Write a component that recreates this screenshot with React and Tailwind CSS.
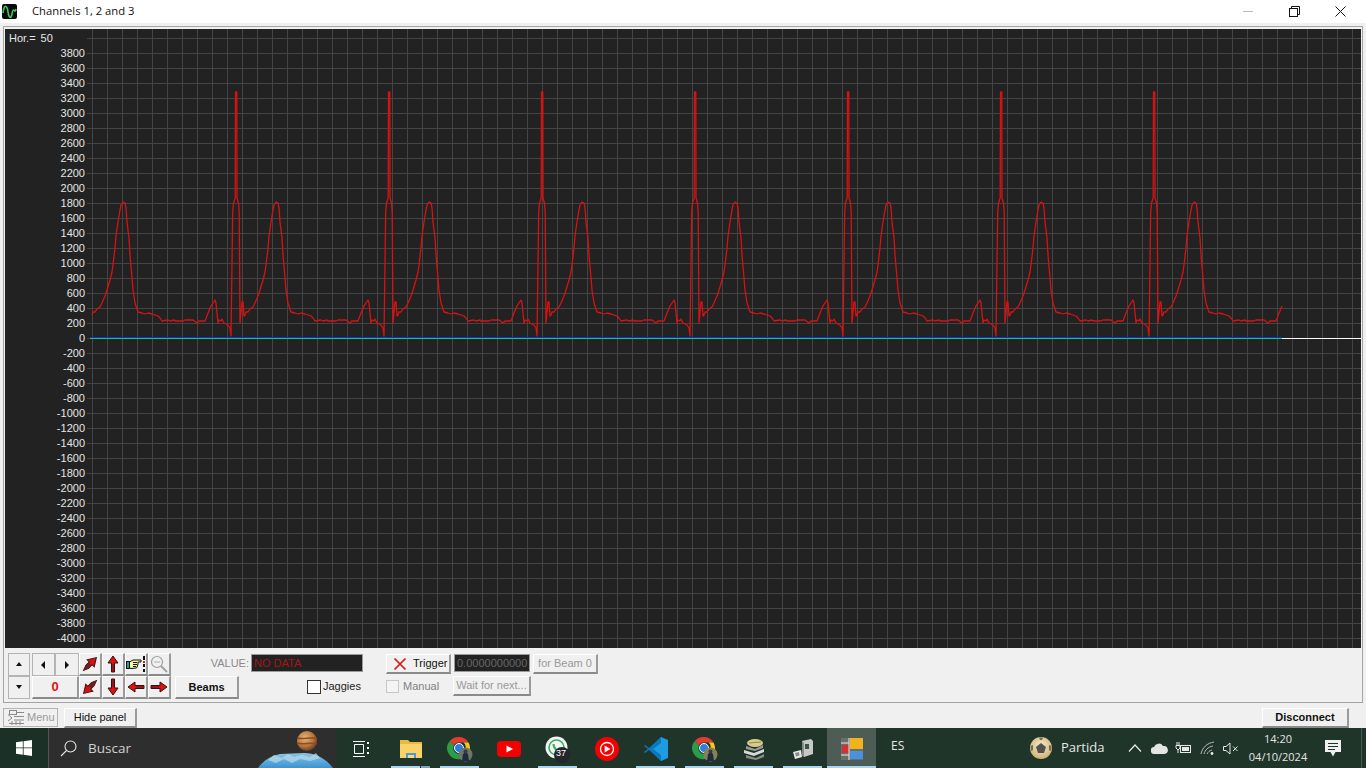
import React from 'react';

const labels = [];
for (let v = 3800; v >= -4000; v -= 200) labels.push(v);

const gridX = [];
for (let x = 92; x < 1361; x += 15) gridX.push(x);
const gridY = [];
for (let y = 38; y < 648; y += 15) gridY.push(y);

// one heartbeat of the trace, in screen coordinates of the first period
const beat = [
  [92, 315], [93, 312], [95, 312], [97, 309], [100, 307], [102, 303], [105, 296], [107, 290], [110, 280], [112, 272],
  [113, 265], [115, 248], [116, 236], [118, 222], [120, 210], [121, 205], [123, 202], [125, 203], [126, 208], [127, 222],
  [129, 238], [130, 255], [132, 278], [133, 290], [135, 303], [137, 309], [138, 312], [142, 313], [145, 314], [148, 313],
  [152, 314], [158, 316], [160, 318], [162, 321], [168, 320], [170, 321], [174, 320], [175, 321], [183, 321], [185, 320],
  [193, 320], [197, 323], [199, 321], [205, 321], [208, 313], [211, 306], [213, 303], [215, 300], [216, 303], [218, 323],
  [219, 320], [221, 321], [222, 319], [224, 323], [228, 325], [230, 328], [231, 336], [232.7, 212], [233.5, 203], [235.2, 198],
  [235.5, 92], [236.8, 92], [237, 198], [238.5, 203], [239.2, 212], [240, 323], [242, 302], [243, 302], [244, 316],
];

const tracePoints = [];
for (let k = 0; k < 8; k++) {
  beat.forEach(([x, y]) => {
    if (x + 153 * k <= 1282) tracePoints.push(`${x + 153 * k},${y}`);
  });
}

const raised = 'border-t border-l border-r-2 border-b-2 border-t-white border-l-white border-r-[#9a9a9a] border-b-[#8a8a8a] bg-[#f0f0f0] whitespace-nowrap';
const flat = 'border border-[#b4b4b4] bg-[#f0f0f0]';

function Chart() {
  return (
    <svg className="w-[1274px] h-[619px] block" viewBox="87 29 1274 619">
      {gridX.map(x => <rect key={x} x={x} y={29} width={1} height={619} fill="#444444" />)}
      {gridY.map(y => <rect key={y} x={87} y={y} width={1274} height={1} fill="#444444" />)}
      <rect x={90} y={337} width={1192} height={1} fill="#0a30c8" />
      <rect x={90} y={338} width={1192} height={1} fill="#18c878" />
      <rect x={1282} y={338} width={79} height={1} fill="#ffffff" />
      <polyline points={tracePoints.join(' ')} fill="none" stroke="#d81212" strokeWidth="1.3" strokeLinejoin="round" />
    </svg>
  );
}

function Tri({ dir }) {
  const pts = { up: '4,1 7,5 1,5', down: '1,1 7,1 4,5', left: '5,0 5,8 1,4', right: '2,0 2,8 6,4' };
  return (
    <svg width="8" height="8" viewBox="0 0 8 8">
      <polygon points={pts[dir]} fill="#111111" />
    </svg>
  );
}

function Arrow({ rotate = 0, long = false }) {
  return (
    <svg width="20" height="20" viewBox="0 0 20 20">
      <g transform={`rotate(${rotate} 10 10)`}>
        {long ? (
          <>
            <path d="M10 1 L15 9 L12 9 L12 14 L10 19 L8 14 L8 9 L5 9 Z" fill="#d81010" stroke="#3a1010" strokeWidth="1" />
            <path d="M8 10 L12 10 L12 14 L10 19 L8 14 Z" fill="#6a2020" />
          </>
        ) : (
          <>
            <path d="M10 2 L15 9 L11.5 9 L11.5 18 L8.5 18 L8.5 9 L5 9 Z" fill="#e01010" stroke="#301010" strokeWidth="1" />
            <path d="M10 10 L10 18" stroke="#5a1818" strokeWidth="1" />
          </>
        )}
      </g>
    </svg>
  );
}

function HandIcon() {
  return (
    <svg width="20" height="18" viewBox="0 0 20 18">
      <rect x="0.5" y="6.5" width="3" height="7" fill="#2a9a9a" stroke="#111" strokeWidth="1" />
      <path d="M3.5 7 L7 5 L15 5 L15 7 L12 7 L12 9 L11.5 11 L10.5 13 L5 13.5 L3.5 13 Z" fill="#f8f69a" stroke="#111" strokeWidth="1" />
      <path d="M7 7.5 L11 7.5 M7 9.5 L11 9.5 M7 11.5 L10 11.5" stroke="#111" strokeWidth="1" />
      <rect x="17" y="1" width="2" height="4" fill="#111" />
      <rect x="17" y="6" width="2" height="2" fill="#d02020" />
      <rect x="17" y="9" width="2" height="3" fill="#111" />
      <rect x="17" y="14" width="2" height="3" fill="#111" />
    </svg>
  );
}

function ZoomIcon() {
  return (
    <svg width="20" height="20" viewBox="0 0 20 20" fill="none">
      <circle cx="8" cy="8" r="5.5" stroke="#a0a0a0" strokeWidth="1.2" />
      <path d="M5 8 L11 8" stroke="#b0b0b0" strokeWidth="1" />
      <path d="M12 12 L18 18" stroke="#a0a0a0" strokeWidth="2" />
    </svg>
  );
}

function MenuIcon() {
  return (
    <svg width="16" height="15" viewBox="0 0 16 15" fill="none" stroke="#8a8a8a" strokeWidth="1">
      <rect x="1.5" y="0.5" width="7" height="4" />
      <path d="M0 4.5 L4 8 L0 11 M8 2.5 L16 2.5 M6 6.5 L16 6.5 M6 10 L16 10 M1 13.5 L16 13.5 M4 11 L4 15 M8 11 L8 15 M12 11 L12 15" />
    </svg>
  );
}

function ControlCluster() {
  return (
    <div className="flex">
      <div className="flex flex-col w-[22px]">
        <button className={`${flat} h-[23px] flex items-center justify-center`}><Tri dir="up" /></button>
        <button className={`${flat} h-[23px] flex items-center justify-center`}><Tri dir="down" /></button>
      </div>
      <div className="flex flex-col w-[47px] ml-[2px]">
        <div className="flex">
          <button className={`${flat} w-[23px] h-[23px] flex items-center justify-center`}><Tri dir="left" /></button>
          <button className={`${flat} w-[24px] h-[23px] flex items-center justify-center`}><Tri dir="right" /></button>
        </div>
        <button className={`${raised} h-[23px] text-[#e01010] font-bold text-[13px]`}>0</button>
      </div>
      <div className="grid grid-cols-[23px_23px_23px_23px] grid-rows-[23px_23px]">
        <button className={`${raised} flex items-center justify-center`}><Arrow rotate={45} long /></button>
        <button className={`${raised} flex items-center justify-center`}><Arrow /></button>
        <button className={`${raised} flex items-center justify-center`}><HandIcon /></button>
        <button className={`${raised} flex items-center justify-center`}><ZoomIcon /></button>
        <button className={`${raised} flex items-center justify-center`}><Arrow rotate={225} long /></button>
        <button className={`${raised} flex items-center justify-center`}><Arrow rotate={180} /></button>
        <button className={`${raised} flex items-center justify-center`}><Arrow rotate={270} /></button>
        <button className={`${raised} flex items-center justify-center`}><Arrow rotate={90} /></button>
      </div>
    </div>
  );
}

function ValueGroup() {
  return (
    <div className="flex flex-col w-[188px] ml-[4px]">
      <div className="flex items-center justify-end h-[18px] mt-[1px] mb-[4px]">
        <span className="text-[11px] text-[#8a8a8a] mr-[2px]">VALUE:</span>
        <div className="w-[112px] h-[18px] bg-[#222222] border border-[#9a9a9a] text-[#a81414] text-[11px] leading-[16px] pl-[2px]">NO DATA</div>
      </div>
      <div className="flex items-center h-[23px]">
        <button className={`${raised} w-[64px] h-[23px] text-[11px] font-bold text-[#111]`}>Beams</button>
        <span className="w-[14px] h-[14px] ml-[68px] mb-[2px] border border-[#333] bg-white" />
        <span className="ml-[2px] mb-[2px] text-[11px] text-[#222]">Jaggies</span>
      </div>
    </div>
  );
}

function TriggerGroup() {
  return (
    <div className="flex flex-col ml-[23px] mt-[1px] gap-[2px]">
      <div className="flex h-[20px]">
        <button className={`${raised} w-[65px] flex items-center text-[11px] text-[#111] pl-[6px]`}>
          <svg width="14" height="14" viewBox="0 0 14 14" fill="none" stroke="#d81818" strokeWidth="1.7">
            <path d="M1.5 1.5 L12.5 12.5 M12.5 1.5 L1.5 12.5" />
          </svg>
          <span className="ml-[6px]">Trigger</span>
        </button>
        <div className="w-[76px] h-[18px] ml-[3px] bg-[#222222] border border-[#9a9a9a] text-[#666666] text-[11px] leading-[16px] pl-[2px] whitespace-nowrap">0.0000000000</div>
        <button className={`${raised} w-[65px] ml-[3px] text-[11px] text-[#999999]`}>for Beam 0</button>
      </div>
      <div className="flex items-center h-[20px]">
        <span className="w-[13px] h-[13px] border border-[#c8c8c8] bg-[#f4f4f4]" />
        <span className="ml-[4px] w-[50px] text-[11px] text-[#808080]">Manual</span>
        <button className={`${raised} w-[78px] h-[20px] text-[11px] text-[#999999]`}>Wait for next...</button>
      </div>
    </div>
  );
}

function WindowsLogo() {
  return (
    <svg width="16" height="16" viewBox="0 0 16 16" fill="#ffffff">
      <path d="M0 2.3 L6.8 1.3 L6.8 7.5 L0 7.5 Z M7.6 1.2 L16 0 L16 7.5 L7.6 7.5 Z M0 8.3 L6.8 8.3 L6.8 14.7 L0 13.7 Z M7.6 8.3 L16 8.3 L16 16 L7.6 14.8 Z" />
    </svg>
  );
}

function PlanetArt() {
  return (
    <svg width="78" height="40" viewBox="0 0 78 40">
      <defs>
        <radialGradient id="jup" cx="0.4" cy="0.35" r="0.7">
          <stop offset="0" stopColor="#e8b47a" />
          <stop offset="0.6" stopColor="#b8743a" />
          <stop offset="1" stopColor="#5a3a28" />
        </radialGradient>
        <linearGradient id="ice" x1="0" y1="0" x2="0" y2="1">
          <stop offset="0" stopColor="#8cc4de" />
          <stop offset="1" stopColor="#3a94d4" />
        </linearGradient>
      </defs>
      <path d="M0 40 C5 33 12 28 22 26 L46 25 C58 25 68 31 75 40 Z" fill="url(#ice)" />
      <path d="M10 32 L16 27 L24 30 L30 26 L36 29 L44 27 L52 29 L58 25 L62 30 L52 33 L42 31 L34 35 L26 31 L18 35 Z" fill="#b8dcec" opacity="0.7" />
      <circle cx="49" cy="13" r="10" fill="url(#jup)" />
      <path d="M39.5 10 C45 12 53 8 59 11 M39 15 C45 17 53 14 59 16" stroke="#8a4e22" strokeWidth="1.5" fill="none" />
    </svg>
  );
}

function ChromeIcon({ avatar }) {
  return (
    <svg width="26" height="26" viewBox="0 0 26 26">
      <path d="M12 1 A11 11 0 0 1 21.5 6.5 L12 6.5 A5.5 5.5 0 0 0 7 9.5 L2.8 5 A11 11 0 0 1 12 1 Z" fill="#e33b2e" />
      <path d="M21.5 6.5 A11 11 0 0 1 13 23 L17 15 A5.5 5.5 0 0 0 16.5 6.5 Z" fill="#f8c51c" />
      <path d="M2.8 5 A11 11 0 0 0 13 23 L17 15 A5.5 5.5 0 0 1 7 9.5 Z" fill="#2a9d48" />
      <circle cx="12" cy="12" r="4.5" fill="#2f7de0" stroke="#ffffff" strokeWidth="1" />
      <circle cx="18.5" cy="18.5" r="7" fill={avatar} />
      <path d="M15 25 L16 18 L18.5 16 L21 18 L22 25 Z" fill="#1c2a44" />
      <circle cx="18.5" cy="15.5" r="2" fill="#3a3a3a" />
    </svg>
  );
}

function YoutubeIcon() {
  return (
    <svg width="24" height="18" viewBox="0 0 24 18">
      <rect x="0" y="1" width="24" height="16" rx="4" fill="#f40000" />
      <polygon points="9.5,5.5 9.5,12.5 16,9" fill="#ffffff" />
    </svg>
  );
}

function WhatsappIcon() {
  return (
    <svg width="28" height="28" viewBox="0 0 28 28">
      <circle cx="12.5" cy="12.5" r="11" fill="#f4f4f4" />
      <circle cx="12.5" cy="12.5" r="7.5" fill="none" stroke="#38b060" strokeWidth="1.6" />
      <path d="M9.5 9 C9.5 13 12.5 16 16 16" fill="none" stroke="#38b060" strokeWidth="2.2" />
      <circle cx="18" cy="20" r="8" fill="#23272b" />
    </svg>
  );
}

function YtMusicIcon() {
  return (
    <svg width="24" height="24" viewBox="0 0 24 24">
      <circle cx="12" cy="12" r="12" fill="#f40000" />
      <circle cx="12" cy="12" r="6.5" fill="none" stroke="#ffffff" strokeWidth="1.3" />
      <polygon points="9.7,8.6 9.7,15.4 15.4,12" fill="#ffffff" />
    </svg>
  );
}

function FolderIcon() {
  return (
    <svg width="24" height="22" viewBox="0 0 24 22">
      <path d="M1 2 L9 2 L11 4 L23 4 L23 7 L1 7 Z" fill="#e8b840" />
      <rect x="1" y="6" width="22" height="14" fill="#fbd267" />
      <path d="M7 20 L7 15 L17 15 L17 20 Z" fill="#4a9ad8" />
      <rect x="9" y="17" width="6" height="3" fill="#f8d878" />
    </svg>
  );
}

function VscodeIcon() {
  return (
    <svg width="24" height="26" viewBox="0 0 24 26">
      <path d="M17 1 L24 4 L24 22 L17 25 L6 13 Z" fill="#1f9be0" />
      <path d="M17 1 L5 12 L1 9 L0 10 L4 13 L0 16 L1 17 L5 14 L17 25 L17 19 L9 13 L17 7 Z" fill="#0a78bd" />
    </svg>
  );
}

function BooksIcon() {
  return (
    <svg width="24" height="24" viewBox="0 0 24 24">
      <path d="M4 18 L14 21 L22 17 L22 20 L14 23 L4 21 Z" fill="#8a8a8a" />
      <path d="M2 13 L12 16 L22 12 L22 15 L12 19 L2 16 Z" fill="#d8d8d8" />
      <path d="M4 9 L13 12 L21 8 L21 11 L13 14 L4 12 Z" fill="#9a9a9a" />
      <ellipse cx="13" cy="6" rx="8" ry="4" fill="#d8cc88" />
      <path d="M7 6 L19 5" stroke="#8a8a50" strokeWidth="1" />
    </svg>
  );
}

function ComputerIcon() {
  return (
    <svg width="24" height="24" viewBox="0 0 24 24">
      <path d="M11 4 L20 2 L22 4 L22 17 L13 20 L11 18 Z" fill="#c8c8c8" />
      <path d="M11 4 L13 6 L13 20 L11 18 Z" fill="#8a8a8a" />
      <rect x="14" y="7" width="4" height="5" fill="#2f5a48" />
      <path d="M2 15 L10 13 L11 20 L4 22 Z" fill="#e8e8e8" />
      <path d="M4 16 L8 15 L8.5 18.5 L5 19.5 Z" fill="#8a8a8a" />
    </svg>
  );
}

function PaletteIcon() {
  return (
    <svg width="22" height="24" viewBox="0 0 22 24">
      <rect x="0" y="1" width="22" height="22" fill="#8a8a8a" opacity="0.45" />
      <rect x="9" y="1" width="13" height="11" fill="#f2b21c" />
      <rect x="9" y="14" width="13" height="8" fill="#4a90dc" />
      <rect x="1" y="8" width="7" height="8" fill="#d83030" />
      <path d="M8 1 L8 23 M0 6 L8 6 M0 18 L8 18" stroke="#e8e8e8" strokeWidth="1" />
    </svg>
  );
}

function Slot({ underline, split, active, children }) {
  return (
    <div className={`w-[49px] h-full flex flex-col ${active ? 'bg-[#4d5c54]' : ''}`}>
      <div className="relative flex-1 flex items-center justify-center pt-[3px]">{children}</div>
      <div className={`h-[2px] flex ${active ? '' : 'mx-[5px]'}`}>
        {underline && <div className="flex-1 bg-[#a6d4f2]" />}
        {split && <div className="w-[9px] ml-[1px] bg-[#7ea4bc]" />}
      </div>
    </div>
  );
}

function TrayIcons() {
  return (
    <div className="flex items-center h-full">
      <div className="w-[24px] flex justify-center">
        <svg width="14" height="8" viewBox="0 0 14 8" fill="none" stroke="#e8e8e8" strokeWidth="1.2"><path d="M1 7.5 L7 1 L13 7.5" /></svg>
      </div>
      <div className="w-[24px] flex justify-center">
        <svg width="17" height="11" viewBox="0 0 17 11" fill="#e4e4e4"><path d="M3.5 11 A3.5 3.5 0 0 1 3 4 A5 5 0 0 1 12 3 A4 4 0 0 1 13.5 11 Z" /></svg>
      </div>
      <div className="w-[24px] flex justify-center">
        <svg width="17" height="12" viewBox="0 0 17 12" fill="none" stroke="#e8e8e8" strokeWidth="1">
          <rect x="5.5" y="3.5" width="10" height="7" />
          <rect x="7" y="5" width="7" height="4" fill="#e8e8e8" stroke="none" />
          <path d="M1 3.5 L5 3.5 L5 6 L3 8 L1 6 Z M2 0 L2 3 M4 0 L4 3 M3 8 L3 11" />
        </svg>
      </div>
      <div className="w-[24px] flex justify-center">
        <svg width="15" height="14" viewBox="0 0 15 14" fill="none" stroke="#c8c8c8" strokeWidth="0.9">
          <path d="M1 13 C2 7 7 2 14 1 M4 13 C5 9 8 6 13 5 M7 13 C8 11 9.5 9.5 12 9" />
          <circle cx="12" cy="12.5" r="1.4" fill="#e8e8e8" stroke="none" />
        </svg>
      </div>
      <div className="w-[24px] flex justify-center">
        <svg width="16" height="13" viewBox="0 0 16 13" fill="none" stroke="#e8e8e8" strokeWidth="1">
          <path d="M0.5 4.5 L3 4.5 L7 1 L7 12 L3 8.5 L0.5 8.5 Z M10 4.5 L14.5 9 M14.5 4.5 L10 9" />
        </svg>
      </div>
    </div>
  );
}

function Taskbar() {
  return (
    <div className="h-[40px] bg-[#1f352a] flex text-white">
      <div className="w-[48px] h-full flex items-center justify-center bg-[#1b3026]"><WindowsLogo /></div>
      <div className="w-[288px] h-full bg-[#2e2e2e] border-l border-[#555] flex justify-between">
        <div className="flex items-center pl-[11px]">
          <svg width="17" height="17" viewBox="0 0 17 17" fill="none" stroke="#e4e4e4" strokeWidth="1.1">
            <circle cx="10.5" cy="6.5" r="5.5" />
            <path d="M6.5 10.5 L1 16" />
          </svg>
          <span className="ml-[11px] text-[13.5px] text-[#d0d0d0] font-['Open_Sans',sans-serif]">Buscar</span>
        </div>
        <div className="self-end h-[40px]"><PlanetArt /></div>
      </div>
      <div className="flex ml-[1px]">
        <Slot>
          <svg width="17" height="16" viewBox="0 0 17 16" fill="none" stroke="#ffffff" strokeWidth="1">
            <path d="M0 0.5 L12 0.5 M0 15.5 L12 15.5 M1.5 3.5 L10.5 3.5 L10.5 12.5 L1.5 12.5 Z" />
            <path d="M15 1 L15 3 M15 6 L15 8 M15 11 L15 13" strokeWidth="2" />
          </svg>
        </Slot>
        <Slot underline split><FolderIcon /></Slot>
        <Slot underline><ChromeIcon avatar="#707468" /></Slot>
        <Slot><YoutubeIcon /></Slot>
        <Slot underline>
          <WhatsappIcon />
          <span className="absolute left-[23px] top-[19px] text-[9px] text-white font-['Liberation_Sans',sans-serif]">37</span>
        </Slot>
        <Slot><YtMusicIcon /></Slot>
        <Slot underline><VscodeIcon /></Slot>
        <Slot underline><ChromeIcon avatar="#8a8058" /></Slot>
        <Slot underline><BooksIcon /></Slot>
        <Slot underline><ComputerIcon /></Slot>
        <Slot underline active><PaletteIcon /></Slot>
      </div>
      <div className="w-[154px] pl-[15px] flex items-center pb-[4px] text-[12px] text-[#e8e8e8] font-['Open_Sans',sans-serif]">ES</div>
      <div className="w-[93px] flex items-center">
        <svg width="22" height="22" viewBox="0 0 22 22">
          <defs>
            <radialGradient id="ball" cx="0.5" cy="0.4" r="0.7">
              <stop offset="0" stopColor="#f4ecd4" />
              <stop offset="1" stopColor="#c8a860" />
            </radialGradient>
          </defs>
          <circle cx="11" cy="11" r="11" fill="url(#ball)" />
          <polygon points="11,6 16,10 14,16 8,16 6,10" fill="#55524c" />
          <path d="M9 0.5 L13 0.5 L12 3 L10 3 Z M0.5 9 L3 8 L3 13 L1 14 Z M21.5 9 L19 8 L19 13 L21 14 Z" fill="#7a6a48" />
        </svg>
        <span className="ml-[9px] text-[13px] text-[#e8e8e8] font-['Open_Sans',sans-serif]">Partida</span>
      </div>
      <TrayIcons />
      <div className="w-[70px] flex flex-col items-center justify-center text-[11px] leading-[18px] text-[#e4e4e4] font-['Open_Sans',sans-serif]">
        <span>14:20</span>
        <span>04/10/2024</span>
      </div>
      <div className="w-[40px] flex items-center justify-center">
        <svg width="16" height="17" viewBox="0 0 16 17">
          <path d="M0 0 L16 0 L16 12 L10.5 12 L8 16.5 L5.5 12 L0 12 Z" fill="#f0f0f0" />
          <path d="M3 3.5 L13 3.5 M3 6.5 L13 6.5 M3 9.5 L10 9.5" stroke="#1f352a" strokeWidth="1" />
        </svg>
      </div>
      <div className="w-[8px]" />
      <div className="flex-1 border-l border-[#44584e]" />
    </div>
  );
}

export default function App() {
  return (
    <div className="w-[1366px] h-[768px] overflow-hidden flex flex-col bg-[#f0f0f0] font-['Liberation_Sans',sans-serif]">
      {/* title bar */}
      <div className="h-[23px] bg-white flex items-center shrink-0">
        <svg className="ml-[2px]" width="15" height="15" viewBox="0 0 15 15">
          <rect width="15" height="15" rx="2" fill="#0a0a0a" />
          <path d="M1 9 C2 1 4 1 5.5 5 C6.5 11 7 14 9 13 C10.5 11 10 6 11.5 6 C12.5 6 13 9 14 5" fill="none" stroke="#3ec85a" strokeWidth="1.6" />
        </svg>
        <span className="ml-[15px] text-[11.25px] text-[#111] font-['Open_Sans',sans-serif]">Channels 1, 2 and 3</span>
        <div className="ml-auto flex items-center">
          <div className="w-[46px] flex justify-center"><div className="w-[10px] h-[1px] bg-[#bbbbbb]" /></div>
          <div className="w-[46px] flex justify-center">
            <svg width="11" height="11" viewBox="0 0 11 11" fill="none" stroke="#111" strokeWidth="1">
              <rect x="0.5" y="2.5" width="8" height="8" />
              <path d="M2.5 2.5 L2.5 0.5 L10.5 0.5 L10.5 8.5 L8.5 8.5" />
            </svg>
          </div>
          <div className="w-[46px] mr-[3px] flex justify-center">
            <svg width="11" height="11" viewBox="0 0 11 11" fill="none" stroke="#111" strokeWidth="1">
              <path d="M0.5 0.5 L10.5 10.5 M10.5 0.5 L0.5 10.5" />
            </svg>
          </div>
        </div>
      </div>

      {/* main frame */}
      <div className="mt-[3px] mx-[3px] border border-[#a4a4a4] px-[1px] pt-[2px] shrink-0">
        <div className="flex h-[619px] bg-[#222222]">
          <div className="w-[82px] flex flex-col text-[#e6e6e6] text-[11px]">
            <div className="h-[17px] pl-[4px] pt-[2px] leading-[14px]">Hor.=<span className="ml-[5px]">50</span></div>
            {labels.map(v => (
              <div key={v} className="h-[15px] leading-[15px] text-right pr-[2px]">{v}</div>
            ))}
          </div>
          <Chart />
        </div>
        <div className="h-[54px] flex pl-[3px] pt-[5px]">
          <ControlCluster />
          <ValueGroup />
          <TriggerGroup />
        </div>
      </div>

      {/* bottom row */}
      <div className="h-[25px] flex pt-[5px] pl-[3px] text-[11px] shrink-0">
        <button className={`${flat} w-[55px] h-[19px] flex items-center pl-[4px] text-[#9a9a9a]`}>
          <MenuIcon />
          <span className="ml-[3px]">Menu</span>
        </button>
        <button className={`${raised} w-[73px] h-[20px] ml-[6px] text-[#111]`}>Hide panel</button>
        <button className={`${raised} w-[87px] h-[20px] ml-auto mr-[17px] font-bold text-[#111]`}>Disconnect</button>
      </div>

      <Taskbar />
    </div>
  );
}
